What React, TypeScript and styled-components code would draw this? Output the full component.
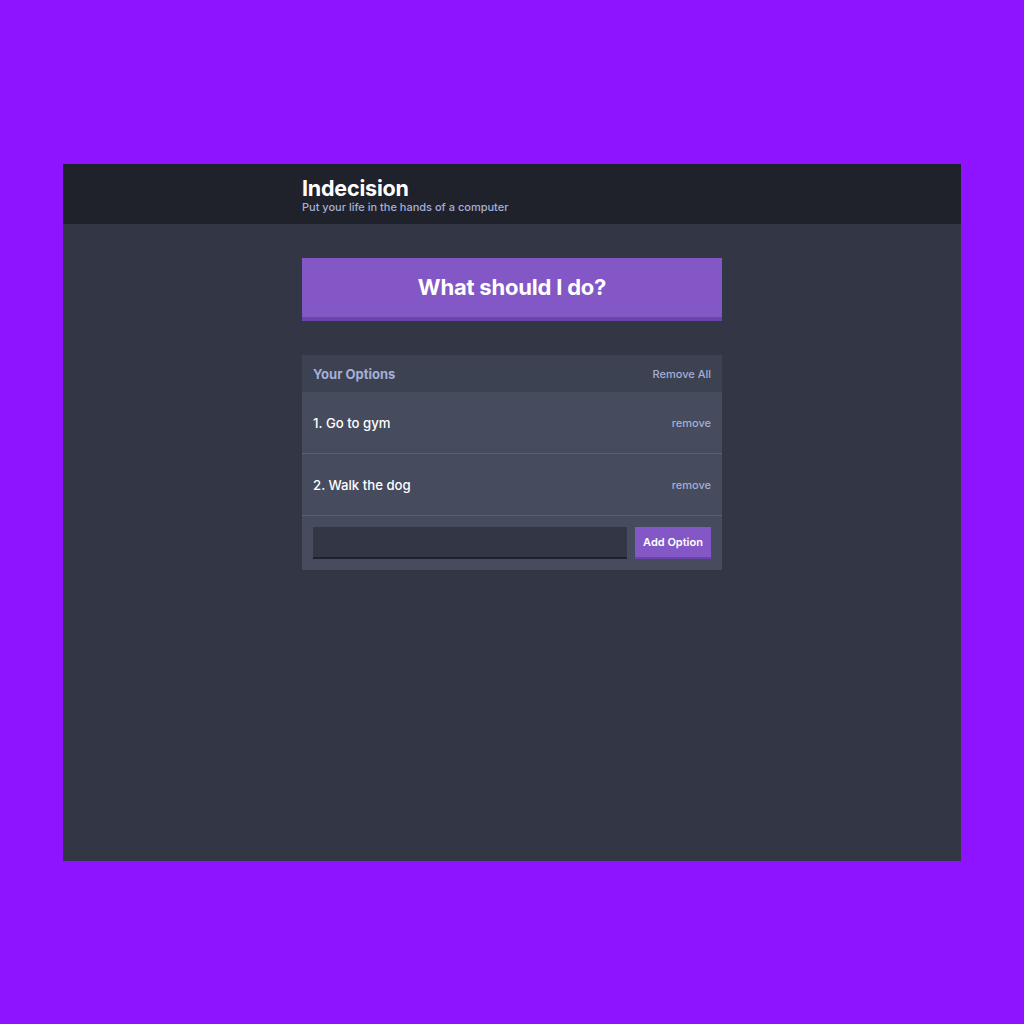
import React from "react";
import styled, { createGlobalStyle } from "styled-components";

const Global = createGlobalStyle`
  html, body { margin: 0; padding: 0; }
  body {
    background: #8e14ff;
    font-family: Inter, "Noto Sans", sans-serif;
  }
  * { box-sizing: border-box; }
`;

const Stage = styled.div`
  height: 1024px;
  display: flex;
  align-items: center;
  justify-content: center;
`;

const Window = styled.div`
  width: 898px;
  height: 697px;
  background: #333745;
  display: flex;
  flex-direction: column;
`;

const Header = styled.header`
  height: 60px;
  background: #20222b;
  display: flex;
  justify-content: center;
`;

const Container = styled.div`
  width: 420px;
  margin: 0 auto;
`;

const HeaderInner = styled(Container)`
  padding-top: 12px;
`;

const Title = styled.h1`
  margin: 0;
  color: #fff;
  font-size: 21.5px;
  font-weight: 700;
  line-height: 24px;
  letter-spacing: -0.2px;
`;

const Subtitle = styled.h2`
  margin: 0;
  color: #a5afd7;
  font-size: 11px;
  font-weight: 500;
  line-height: 14px;
`;

const Main = styled(Container)`
  padding-top: 34px;
`;

const BigButton = styled.button`
  width: 100%;
  height: 63px;
  background: #8357c5;
  border: none;
  border-bottom: 4px solid #6a44a8;
  color: #fff;
  font-family: inherit;
  font-size: 22px;
  font-weight: 700;
  letter-spacing: -0.2px;
  padding: 0;
  margin-bottom: 34px;
`;

const Panel = styled.div`
  background: #464b5e;
`;

const PanelHeader = styled.div`
  height: 37px;
  background: #3c4251;
  display: flex;
  align-items: center;
  justify-content: space-between;
  padding: 2px 11px 0;
`;

const PanelTitle = styled.h3`
  margin: 0;
  color: #a5afd7;
  font-size: 13px;
  font-weight: 700;
`;

const LinkButton = styled.button<{ $size?: number }>`
  background: none;
  border: none;
  padding: 0;
  color: #a5afd7;
  font-family: inherit;
  font-size: ${(p) => p.$size ?? 11}px;
  font-weight: 500;
`;

const Row = styled.div`
  height: 62px;
  border-bottom: 1px solid #5a5f72;
  display: flex;
  align-items: center;
  justify-content: space-between;
  padding: 2px 11px 0;
`;

const OptionText = styled.p`
  margin: 0;
  color: #fff;
  font-size: 13.2px;
  font-weight: 500;
`;

const Form = styled.form`
  display: flex;
  gap: 8px;
  padding: 11px 11px 11px;
  height: 54px;
`;

const Input = styled.input`
  flex: 1;
  height: 32px;
  background: #333745;
  border: none;
  border-bottom: 2px solid #20222b;
  color: #fff;
  outline: none;
`;

const AddButton = styled.button`
  width: 76px;
  height: 32px;
  background: #8357c5;
  border: none;
  border-bottom: 2px solid #6a44a8;
  color: #fff;
  font-family: inherit;
  font-size: 11px;
  font-weight: 600;
  padding: 0;
`;

const options = ["Go to gym", "Walk the dog"];

export default function App() {
  return (
    <>
      <Global />
      <Stage>
        <Window>
          <Header>
            <HeaderInner>
              <Title>Indecision</Title>
              <Subtitle>Put your life in the hands of a computer</Subtitle>
            </HeaderInner>
          </Header>
          <Main>
            <BigButton>What should I do?</BigButton>
            <Panel>
              <PanelHeader>
                <PanelTitle>Your Options</PanelTitle>
                <LinkButton $size={11}>Remove All</LinkButton>
              </PanelHeader>
              {options.map((o, i) => (
                <Row key={o}>
                  <OptionText>
                    {i + 1}. {o}
                  </OptionText>
                  <LinkButton>remove</LinkButton>
                </Row>
              ))}
              <Form onSubmit={(e) => e.preventDefault()}>
                <Input type="text" />
                <AddButton>Add Option</AddButton>
              </Form>
            </Panel>
          </Main>
        </Window>
      </Stage>
    </>
  );
}
